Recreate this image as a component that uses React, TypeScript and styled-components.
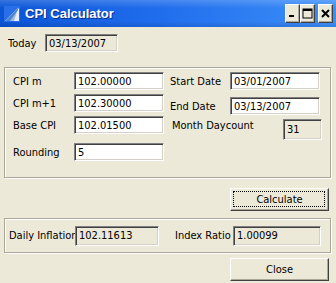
import React from "react";
import styled, { createGlobalStyle } from "styled-components";

const Global = createGlobalStyle`
  html, body { margin: 0; padding: 0; background: #ECE9D8; }
  body { font-family: Tahoma, "DejaVu Sans Condensed", "Liberation Sans", sans-serif; font-size: 11px; color: #000; }
`;

const Window = styled.div`
  width: 336px;
  height: 283px;
  background: #ECE9D8;
  display: flex;
  flex-direction: column;
  overflow: hidden;
`;

const TitleBar = styled.div`
  height: 27px;
  display: flex;
  align-items: center;
  padding: 0 3px 0 4px;
  background: linear-gradient(180deg, rgba(255,255,255,0.18) 0%, rgba(255,255,255,0) 30%, rgba(0,0,0,0) 80%, rgba(0,0,40,0.12) 100%),
    linear-gradient(90deg, #0a55d6 0%, #1f6cec 45%, #3d8ff8 100%);
  box-sizing: border-box;
`;

const TitleText = styled.span`
  flex: 1;
  margin-left: 5px;
  color: #fff;
  font-family: "Liberation Sans", Arial, sans-serif;
  font-weight: bold;
  font-size: 13px;
  text-shadow: 1px 1px 0 #0a2d8a;
`;

const CtrlGroup = styled.div`
  display: flex;
  align-items: center;
  gap: 0;
`;

const CtrlBtn = styled.div<{ $gap?: number }>`
  width: 15px;
  height: 19px;
  margin-left: ${(p) => p.$gap ?? 0}px;
  box-sizing: border-box;
  background: #ECE9D8;
  border-top: 1px solid #fff;
  border-left: 1px solid #fff;
  border-right: 1px solid #404040;
  border-bottom: 1px solid #404040;
  box-shadow: inset -1px -1px 0 #ACA899;
  display: flex;
  align-items: center;
  justify-content: center;
`;

const Content = styled.div`
  display: flex;
  flex-direction: column;
`;

const TodayRow = styled.div`
  display: flex;
  align-items: center;
  margin-top: 7px;
  padding-left: 8px;
  height: 18px;
`;

const Label = styled.span<{ $w?: number }>`
  width: ${(p) => (p.$w ? `${p.$w}px` : "auto")};
  white-space: nowrap;
  overflow: hidden;
  flex-shrink: 0;
`;

const Field = styled.div<{ $w: number; $h?: number; $ro?: boolean }>`
  width: ${(p) => p.$w}px;
  height: ${(p) => p.$h ?? 18}px;
  box-sizing: border-box;
  background: ${(p) => (p.$ro ? "#ECE9D8" : "#fff")};
  border-top: 1px solid #808080;
  border-left: 1px solid #808080;
  border-right: 1px solid #fff;
  border-bottom: 1px solid #fff;
  box-shadow: inset 1px 1px 0 #404040, inset -1px -1px 0 #D4D0C8;
  padding: 0 3px;
  display: flex;
  align-items: center;
  flex-shrink: 0;
  white-space: nowrap;
  overflow: hidden;
`;

const Group = styled.div<{ $h: number; $mt: number }>`
  margin: ${(p) => p.$mt}px 0 0 4px;
  width: 327px;
  height: ${(p) => p.$h}px;
  box-sizing: border-box;
  border: 1px solid #ACA899;
  box-shadow: inset 1px 1px 0 #fff, 1px 1px 0 #fff;
  display: flex;
`;

const Column = styled.div<{ $w: number; $pl: number }>`
  width: ${(p) => p.$w}px;
  padding-left: ${(p) => p.$pl}px;
  padding-top: 4px;
  display: flex;
  flex-direction: column;
  box-sizing: border-box;
`;

const Row = styled.div<{ $mt?: number }>`
  display: flex;
  align-items: center;
  margin-top: ${(p) => p.$mt ?? 0}px;
`;

const ButtonRow = styled.div<{ $mt: number }>`
  display: flex;
  justify-content: flex-end;
  margin-top: ${(p) => p.$mt}px;
  padding-right: 7px;
`;

const Button = styled.div<{ $focus?: boolean }>`
  width: 99px;
  height: 23px;
  box-sizing: border-box;
  background: #ECE9D8;
  border-top: 1px solid #fff;
  border-left: 1px solid #fff;
  border-right: 1px solid #404040;
  border-bottom: 1px solid #404040;
  box-shadow: inset -1px -1px 0 #ACA899;
  display: flex;
  align-items: center;
  justify-content: center;
  position: relative;
  &::after {
    content: "";
    display: ${(p) => (p.$focus ? "block" : "none")};
    position: absolute;
    inset: 2px 3px 3px 2px;
    border: 1px dotted #000;
  }
`;

const InfoGroup = styled(Group)`
  align-items: center;
  padding-left: 4px;
`;

const AppIcon = () => (
  <svg width="16" height="16" viewBox="0 0 16 16">
    <rect x="0" y="0" width="16" height="16" fill="#2a6fe8" />
    <polygon points="1,15 14,2 15,3 15,15" fill="#e8eef8" />
    <polygon points="1,15 14,2 10,15" fill="#9fb8dc" />
    <polygon points="1,15 6,15 14,4 14,2" fill="#4a86d8" />
  </svg>
);

export default function App() {
  return (
    <Window>
      <Global />
      <TitleBar>
        <AppIcon />
        <TitleText>CPI Calculator</TitleText>
        <CtrlGroup>
          <CtrlBtn>
            <svg width="9" height="9" viewBox="0 0 9 9">
              <rect x="1" y="6" width="5" height="2" fill="#000" />
            </svg>
          </CtrlBtn>
          <CtrlBtn>
            <svg width="11" height="11" viewBox="0 0 11 11">
              <rect x="1" y="1" width="9" height="9" fill="none" stroke="#000" strokeWidth="1" />
              <rect x="1" y="1" width="9" height="2" fill="#000" />
            </svg>
          </CtrlBtn>
          <CtrlBtn $gap={3}>
            <svg width="9" height="9" viewBox="0 0 9 9">
              <path d="M1 1 L8 8 M8 1 L1 8" stroke="#000" strokeWidth="2" />
            </svg>
          </CtrlBtn>
        </CtrlGroup>
      </TitleBar>
      <Content>
        <TodayRow>
          <Label $w={37}>Today</Label>
          <Field $w={73} $ro>03/13/2007</Field>
        </TodayRow>
        <Group $mt={15} $h={111}>
          <Column $w={162} $pl={8}>
            <Row>
              <Label $w={61}>CPI m</Label>
              <Field $w={90}>102.00000</Field>
            </Row>
            <Row $mt={4}>
              <Label $w={61}>CPI m+1</Label>
              <Field $w={90}>102.30000</Field>
            </Row>
            <Row $mt={4}>
              <Label $w={61}>Base CPI</Label>
              <Field $w={90}>102.01500</Field>
            </Row>
            <Row $mt={9}>
              <Label $w={61}>Rounding</Label>
              <Field $w={90}>5</Field>
            </Row>
          </Column>
          <Column $w={163} $pl={3}>
            <Row>
              <Label $w={60}>Start Date</Label>
              <Field $w={90}>03/01/2007</Field>
            </Row>
            <Row $mt={7}>
              <Label $w={60}>End Date</Label>
              <Field $w={90}>03/13/2007</Field>
            </Row>
            <Row $mt={4}>
              <Label $w={111} style={{ paddingLeft: 2, alignSelf: "flex-start" }}>Month Daycount</Label>
              <Field $w={39} $h={21} $ro>31</Field>
            </Row>
          </Column>
        </Group>
        <ButtonRow $mt={10}>
          <Button $focus>Calculate</Button>
        </ButtonRow>
        <InfoGroup $mt={7} $h={35}>
          <Label $w={66}>Daily Inflation</Label>
          <Field $w={84} $h={20} $ro>102.11613</Field>
          <Label $w={58} style={{ marginLeft: 16 }}>Index Ratio</Label>
          <Field $w={88} $h={20} $ro>1.00099</Field>
        </InfoGroup>
        <ButtonRow $mt={5}>
          <Button>Close</Button>
        </ButtonRow>
      </Content>
    </Window>
  );
}
